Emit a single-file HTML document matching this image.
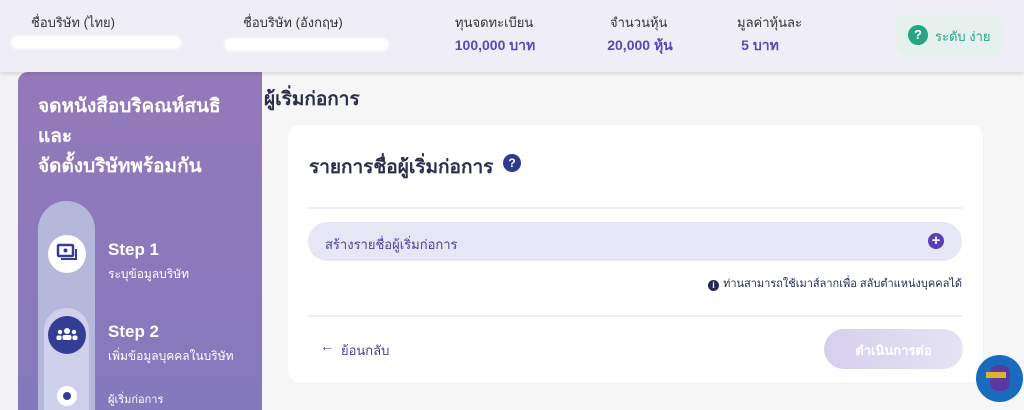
<!DOCTYPE html>
<html style="width:1024px;height:410px;overflow:hidden"><head><meta charset="utf-8"><style>
*{margin:0;padding:0;box-sizing:border-box}
body{width:1024px;height:410px;overflow:hidden;background:#f3f3f5;font-family:"Liberation Sans","Noto Sans CJK SC",sans-serif;position:relative}
.a{position:absolute}
.hdr{left:0;top:0;width:1024px;height:72px;background:#efeef6;box-shadow:0 2px 4px rgba(0,0,0,.12);z-index:2}
.lbl{font-size:13px;color:#333}
.val{font-size:14px;color:#5a48b8;font-weight:bold;text-align:center}
.blur{background:#fff;border-radius:8px;height:13px;filter:blur(1px)}
.clip{left:0;top:0;width:1024px;height:410px;overflow:hidden}
</style></head><body>
<div class="a clip">
<div class="a hdr">
 <div class="a lbl" style="left:31px;top:12px">ชื่อบริษัท (ไทย)</div>
 <div class="a blur" style="left:11px;top:36px;width:170px"></div>
 <div class="a lbl" style="left:243px;top:12px">ชื่อบริษัท (อังกฤษ)</div>
 <div class="a blur" style="left:224px;top:38px;width:165px"></div>
 <div class="a lbl" style="left:455px;top:12px">ทุนจดทะเบียน</div>
 <div class="a val" style="left:448px;top:35px;width:94px">100,000 บาท</div>
 <div class="a lbl" style="left:610px;top:12px">จำนวนหุ้น</div>
 <div class="a val" style="left:593px;top:35px;width:94px">20,000 หุ้น</div>
 <div class="a lbl" style="left:737px;top:12px">มูลค่าหุ้นละ</div>
 <div class="a val" style="left:735px;top:35px;width:50px">5 บาท</div>
 <div class="a" style="left:895px;top:13px;width:108px;height:44px;border-radius:14px;background:#e6f1ee"></div>
 <div class="a" style="left:908px;top:25px;width:20px;height:20px;border-radius:50%;background:#26a584;color:#fff;font-size:13px;font-weight:bold;text-align:center;line-height:20px">?</div>
 <div class="a" style="left:935px;top:26px;font-size:13px;color:#26a584">ระดับ ง่าย</div>
</div>
<div class="a" style="left:18px;top:72px;width:244px;height:338px;background:linear-gradient(180deg,#9479ba,#8479bd);border-top-left-radius:10px;overflow:hidden">
 <div class="a" style="left:20px;top:129px;width:57px;height:260px;border-radius:29px;background:#b5b8db"></div>
 <div class="a" style="left:26px;top:236px;width:45px;height:150px;border-radius:23px;background:#cfd1ec"></div>
</div>
<div class="a" style="left:38px;top:92px;font-size:19px;color:#fff;line-height:30px;font-weight:bold">จดหนังสือบริคณห์สนธิ<br>และ<br>จัดตั้งบริษัทพร้อมกัน</div>
<div class="a" style="left:48px;top:235px;width:38px;height:38px;border-radius:50%;background:#fff"></div>
<svg class="a" style="left:55px;top:243px" width="24" height="22" viewBox="0 0 24 22"><rect x="3" y="2" width="15" height="11" rx="1" fill="none" stroke="#343d96" stroke-width="2.5"/><circle cx="10.5" cy="7.5" r="2" fill="#343d96"/><path d="M21 6v10H6" fill="none" stroke="#343d96" stroke-width="2"/></svg>
<div class="a" style="left:48px;top:316px;width:38px;height:38px;border-radius:50%;background:#343d96"></div>
<svg class="a" style="left:55px;top:325px" width="24" height="20" viewBox="0 0 24 20"><circle cx="12" cy="6" r="3" fill="#fff"/><circle cx="5" cy="7" r="2.2" fill="#fff"/><circle cx="19" cy="7" r="2.2" fill="#fff"/><rect x="7.5" y="10" width="9" height="5" rx="2" fill="#fff"/><rect x="1.5" y="10.5" width="5" height="4.5" rx="1.5" fill="#fff"/><rect x="17.5" y="10.5" width="5" height="4.5" rx="1.5" fill="#fff"/></svg>
<div class="a" style="left:57px;top:386px;width:20px;height:20px;border-radius:50%;background:#fff"></div>
<div class="a" style="left:63px;top:392px;width:8px;height:8px;border-radius:50%;background:#343d96"></div>
<div class="a" style="left:108px;top:240px;font-size:17px;color:#fff;font-weight:bold">Step 1</div>
<div class="a" style="left:108px;top:265px;font-size:12px;color:#fff">ระบุข้อมูลบริษัท</div>
<div class="a" style="left:108px;top:322px;font-size:17px;color:#fff;font-weight:bold">Step 2</div>
<div class="a" style="left:108px;top:347px;font-size:12px;color:#fff">เพิ่มข้อมูลบุคคลในบริษัท</div>
<div class="a" style="left:108px;top:390px;font-size:11px;color:#fff">ผู้เริ่มก่อการ</div>
<div class="a" style="left:262px;top:72px;width:762px;height:338px;background:#f6f6f7"></div>
<div class="a" style="left:264px;top:84px;font-size:19px;color:#2b2f4a;font-weight:bold">ผู้เริ่มก่อการ</div>
<div class="a" style="left:288px;top:125px;width:695px;height:257px;background:#fff;border-radius:12px"></div>
<div class="a" style="left:309px;top:152px;font-size:19px;color:#2b2f4a;font-weight:bold">รายการชื่อผู้เริ่มก่อการ</div>
<div class="a" style="left:503px;top:154px;width:18px;height:18px;border-radius:50%;background:#2f3a8f;color:#fff;font-size:12px;font-weight:bold;text-align:center;line-height:18px">?</div>
<div class="a" style="left:308px;top:207px;width:654px;height:2px;background:#eeeef2"></div>
<div class="a" style="left:308px;top:222px;width:654px;height:39px;border-radius:20px;background:#e6e6f5"></div>
<div class="a" style="left:325px;top:234px;font-size:13px;color:#4a3f9a">สร้างรายชื่อผู้เริ่มก่อการ</div>
<div class="a" style="left:928px;top:233px;width:16px;height:16px;border-radius:50%;background:#5a3fb8;color:#fff;font-size:15px;font-weight:bold;text-align:center;line-height:16px">+</div>
<div class="a" style="right:62px;top:274px;font-size:11px;color:#222a55;white-space:nowrap"><span style="display:inline-block;width:11px;height:11px;border-radius:50%;background:#222a55;color:#fff;font-size:9px;font-weight:bold;text-align:center;line-height:11px;vertical-align:-1px;margin-right:4px">i</span>ท่านสามารถใช้เมาส์ลากเพื่อ สลับตำแหน่งบุคคลได้</div>
<div class="a" style="left:308px;top:315px;width:654px;height:2px;background:#eeeef2"></div>
<div class="a" style="left:320px;top:338px;font-size:14px;color:#5a48b8">←</div>
<div class="a" style="left:341px;top:340px;font-size:13px;color:#4a3f9a">ย้อนกลับ</div>
<div class="a" style="left:824px;top:329px;width:139px;height:40px;border-radius:20px;background:linear-gradient(90deg,#d6cfee,#e5e3f3)"></div>
<div class="a" style="left:824px;top:340px;width:139px;text-align:center;font-size:13px;color:#fff;font-weight:bold">ดำเนินการต่อ</div>
<div class="a" style="left:976px;top:355px;width:47px;height:47px;border-radius:50%;background:#1a6bbd"></div>
<div class="a" style="left:990px;top:365px;width:20px;height:26px;border-radius:8px;background:#5a3aa0"></div>
<div class="a" style="left:986px;top:372px;width:20px;height:6px;background:#e0b030"></div>
</div>
</body></html>
